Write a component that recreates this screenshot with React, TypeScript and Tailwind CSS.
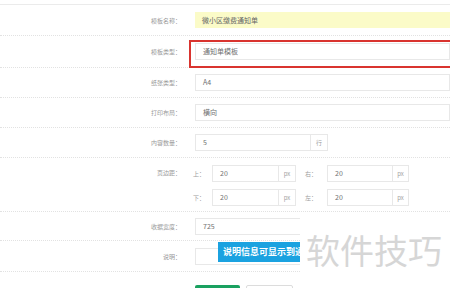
const cjk = "font-['Noto_Sans_CJK_SC','Noto_Sans',sans-serif]";

function Row({
  label,
  h,
  children,
  top = false,
}: {
  label: string;
  h: string;
  children?: React.ReactNode;
  top?: boolean;
}) {
  return (
    <div className={`flex ${top ? "items-start pt-[7px]" : "items-center"} ${h} border-b border-dotted border-[#e2e2e2]`}>
      <div className={`w-[181px] shrink-0 text-right text-[6px] text-[#9a9a9a] ${top ? "leading-[16px]" : ""}`}>
        {label}
      </div>
      <div className="ml-[14px] flex-1 min-w-0">{children}</div>
    </div>
  );
}

function Field({ value, className = "" }: { value?: string; className?: string }) {
  return (
    <div
      className={`h-[17px] border border-[#e8e8e8] px-[7px] flex items-center text-[7px] text-[#707070] ${className}`}
    >
      {value}
    </div>
  );
}

function Addon({ text, w }: { text: string; w: string }) {
  return (
    <div className={`h-[17px] ${w} border border-l-0 border-[#e8e8e8] flex items-center justify-center text-[6px] text-[#a0a0a0]`}>
      {text}
    </div>
  );
}

function MarginLine({ a, b }: { a: string; b: string }) {
  return (
    <div className="flex items-center">
      <span className="w-[17px] -ml-[2px] text-[6px] text-[#a0a0a0]">{a}：</span>
      <Field value="20" className="w-[67px] ml-[2px]" />
      <Addon text="px" w="w-[17px]" />
      <span className="w-[22px] ml-[9px] text-[6px] text-[#a0a0a0]">{b}：</span>
      <Field value="20" className="w-[66px]" />
      <Addon text="px" w="w-[16px]" />
    </div>
  );
}

export default function App() {
  return (
    <div className={`relative w-[450px] h-[288px] overflow-hidden bg-white ${cjk}`}>
      <div className="h-[5px] border-b border-[#ebebeb]" />

      <Row label="模板名称：" h="h-[31px]">
        <div className="h-[16px] bg-[#fbfbc8] px-[7px] flex items-center text-[7px] text-[#666]">
          微小区缴费通知单
        </div>
      </Row>

      <Row label="模板类型：" h="h-[32px]">
        <Field value="通知单模板" />
      </Row>

      <Row label="纸张类型：" h="h-[30px]">
        <Field value="A4" />
      </Row>

      <Row label="打印布局：" h="h-[30px]">
        <Field value="横向" />
      </Row>

      <Row label="内容数量：" h="h-[30px]">
        <div className="flex">
          <Field value="5" className="w-[116px]" />
          <Addon text="行" w="w-[17px]" />
        </div>
      </Row>

      <Row label="页边距：" h="h-[54px]" top>
        <div className="flex flex-col gap-[7px]">
          <MarginLine a="上" b="右" />
          <MarginLine a="下" b="左" />
        </div>
      </Row>

      <Row label="收据宽度：" h="h-[29px]">
        <Field value="725" />
      </Row>

      <Row label="说明：" h="h-[31px]">
        <Field />
      </Row>

      <div className="flex gap-[6px] pl-[195px] pt-[13px]">
        <div className="w-[45px] h-[24px] rounded-[2px] bg-[#1aa160]" />
        <div className="w-[47px] h-[24px] rounded-[2px] border border-[#dcdcdc] bg-white" />
      </div>

      {/* annotation box */}
      <div className="absolute left-[189px] top-[40px] w-[270px] h-[28px] border-2 border-[#d9342f]" />

      {/* tooltip */}
      <div className="absolute left-[218px] top-[242px] w-[90px] h-[20px] bg-[#1ba2e0] pl-[5px] flex items-center overflow-hidden whitespace-nowrap text-[9px] font-bold text-white">
        说明信息可显示到通知单
      </div>

      {/* watermark */}
      <div className="absolute left-[300px] top-[214px] right-0 bottom-0 bg-white">
        <div className="pl-[6px] pt-[14px] text-[34px] leading-[44px] text-[#d6d6d6] whitespace-nowrap">
          软件技巧
        </div>
      </div>
    </div>
  );
}
